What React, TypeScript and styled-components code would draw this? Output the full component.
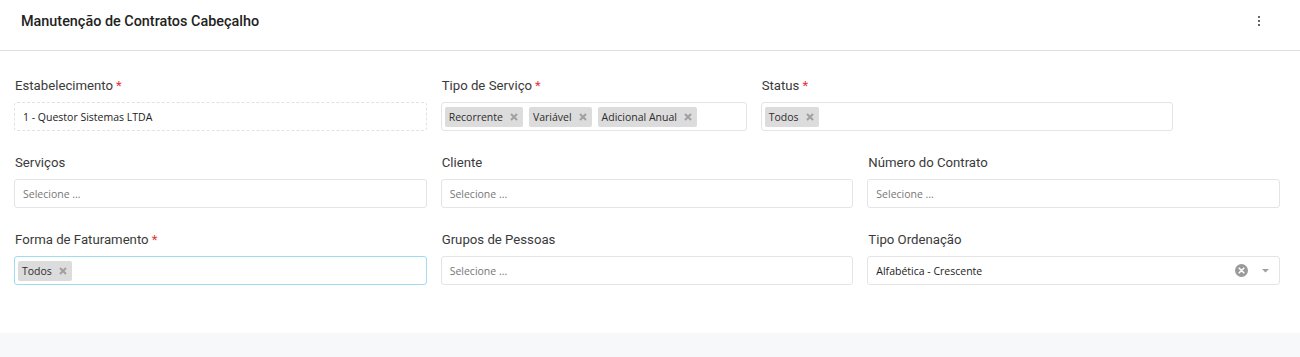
import React from 'react'
import styled, { createGlobalStyle } from 'styled-components'

const GlobalStyle = createGlobalStyle`
  html, body {
    margin: 0;
    padding: 0;
    background: #f7f8fa;
    font-family: Roboto, "Noto Sans", sans-serif;
  }
`

const Card = styled.div`
  background: #fff;
  width: 1300px;
  box-shadow: 0 1px 2px rgba(0, 0, 0, 0.05);
`

const Header = styled.div`
  height: 51px;
  display: flex;
  align-items: flex-start;
  justify-content: space-between;
  padding: 13px 40px 0 21px;
  border-bottom: 1px solid #dedede;
  box-sizing: border-box;
`

const Title = styled.h3`
  margin: 0;
  font-size: 14.4px;
  line-height: 18px;
  font-weight: 500;
  color: #222;
`

const Kebab = styled.div`
  display: flex;
  flex-direction: column;
  gap: 2px;
  padding-top: 3px;
  span {
    width: 2px;
    height: 2px;
    background: #666;
  }
`

const Form = styled.div`
  display: grid;
  grid-template-columns: repeat(12, 1fr);
  column-gap: 14px;
  row-gap: 23px;
  padding: 26px 20px 48px 14px;
`

const Field = styled.div<{ $span: number }>`
  grid-column: span ${p => p.$span};
  display: flex;
  flex-direction: column;
  gap: 7px;
`

const Label = styled.label`
  font-size: 13.2px;
  color: #3a3a3a;
  line-height: 18px;
  height: 18px;
  margin-left: 1px;
`

const Req = styled.span`
  color: #e5323c;
  margin-left: 3px;
`

const Box = styled.div<{ $variant?: 'disabled' | 'focus' }>`
  height: 29px;
  box-sizing: border-box;
  border-radius: 3px;
  border: 1px ${p => (p.$variant === 'disabled' ? 'dashed' : 'solid')}
    ${p => (p.$variant === 'focus' ? '#9ddcf3' : p.$variant === 'disabled' ? '#e2e2e2' : '#e4e4e4')};
  display: flex;
  align-items: center;
  padding: 0 4px 0 3px;
  gap: 6px;
  font-family: "Open Sans", "Noto Sans", sans-serif;
  font-size: 10.5px;
  color: #222;
`

const Value = styled.span`
  padding-left: 5px;
  flex: 1;
`

const Placeholder = styled.span`
  padding-left: 5px;
  color: #777;
`

const Tag = styled.span`
  display: inline-flex;
  align-items: center;
  height: 20px;
  padding: 0 5px 0 4px;
  gap: 7px;
  background: #dcdcdc;
  border-radius: 2px;
  color: #2c2c2c;
  font-size: 10.5px;
`

const Icons = styled.div`
  display: flex;
  align-items: center;
  gap: 14px;
  padding-right: 6px;
`

const Footer = styled.div`
  height: 24px;
  background: #f7f8fa;
`

const CloseX = () => (
  <svg width="8" height="8" viewBox="0 0 8 8">
    <path d="M1 1 L7 7 M7 1 L1 7" stroke="#a0a0a0" strokeWidth="2" />
  </svg>
)

const Tags = ({ items }: { items: string[] }) => (
  <>
    {items.map(t => (
      <Tag key={t}>
        {t}
        <CloseX />
      </Tag>
    ))}
  </>
)

const App: React.FC = () => {
  return (
    <>
      <GlobalStyle />
      <Card>
        <Header>
          <Title>Manutenção de Contratos Cabeçalho</Title>
          <Kebab>
            <span />
            <span />
            <span />
          </Kebab>
        </Header>
        <Form>
          <Field $span={4}>
            <Label>Estabelecimento<Req>*</Req></Label>
            <Box $variant="disabled">
              <Value>1 - Questor Sistemas LTDA</Value>
            </Box>
          </Field>
          <Field $span={3}>
            <Label>Tipo de Serviço<Req>*</Req></Label>
            <Box>
              <Tags items={['Recorrente', 'Variável', 'Adicional Anual']} />
            </Box>
          </Field>
          <Field $span={4}>
            <Label>Status<Req>*</Req></Label>
            <Box>
              <Tags items={['Todos']} />
            </Box>
          </Field>
          <Field $span={1} />

          <Field $span={4}>
            <Label>Serviços</Label>
            <Box><Placeholder>Selecione ...</Placeholder></Box>
          </Field>
          <Field $span={4}>
            <Label>Cliente</Label>
            <Box><Placeholder>Selecione ...</Placeholder></Box>
          </Field>
          <Field $span={4}>
            <Label>Número do Contrato</Label>
            <Box><Placeholder>Selecione ...</Placeholder></Box>
          </Field>

          <Field $span={4}>
            <Label>Forma de Faturamento<Req>*</Req></Label>
            <Box $variant="focus">
              <Tags items={['Todos']} />
            </Box>
          </Field>
          <Field $span={4}>
            <Label>Grupos de Pessoas</Label>
            <Box><Placeholder>Selecione ...</Placeholder></Box>
          </Field>
          <Field $span={4}>
            <Label>Tipo Ordenação</Label>
            <Box>
              <Value>Alfabética - Crescente</Value>
              <Icons>
                <svg width="13" height="13" viewBox="0 0 13 13">
                  <circle cx="6.5" cy="6.5" r="6.5" fill="#9a9a9a" />
                  <path d="M4.2 4.2 L8.8 8.8 M8.8 4.2 L4.2 8.8" stroke="#fff" strokeWidth="1.6" strokeLinecap="round" />
                </svg>
                <svg width="7" height="4" viewBox="0 0 7 4">
                  <path d="M0 0 H7 L3.5 3.5 Z" fill="#a0a0a0" />
                </svg>
              </Icons>
            </Box>
          </Field>
        </Form>
      </Card>
      <Footer />
    </>
  )
}

export default App
